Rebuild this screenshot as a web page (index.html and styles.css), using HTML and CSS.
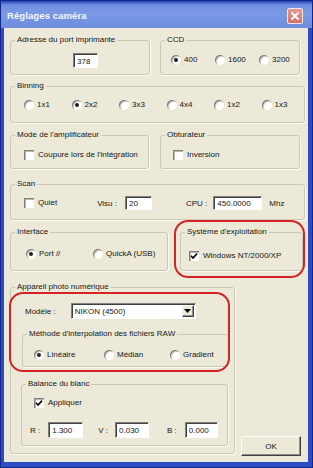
FILE: index.html
```html
<!DOCTYPE html>
<html lang="fr">
<head>
  <meta charset="UTF-8">
  <title>Réglages caméra</title>
  <link rel="stylesheet" href="styles.css">
</head>
<body>
<div class="window">
  <div class="titlebar">
    <span class="title">Réglages caméra</span>
    <span class="close">
      <svg width="10" height="10" viewBox="0 0 10 10"><path d="M1.5 1.5 L8.5 8.5 M8.5 1.5 L1.5 8.5" stroke="#fff" stroke-width="1.8" fill="none"/></svg>
    </span>
  </div>

  <div class="client">
    <div class="row">
      <fieldset class="g g-port">
        <legend>Adresse du port imprimante</legend>
        <div class="in in-port"><input class="edit e-port" value="378"></div>
      </fieldset>
      <fieldset class="g g-ccd">
        <legend>CCD</legend>
        <div class="in in-ccd">
          <label class="opt w-ccd"><span class="radio on"></span>400</label>
          <label class="opt w-ccd"><span class="radio"></span>1600</label>
          <label class="opt"><span class="radio"></span>3200</label>
        </div>
      </fieldset>
    </div>

    <fieldset class="g g-bin">
      <legend>Binning</legend>
      <div class="in in-bin">
        <label class="opt w-bin"><span class="radio"></span>1x1</label>
        <label class="opt w-bin"><span class="radio on"></span>2x2</label>
        <label class="opt w-bin"><span class="radio"></span>3x3</label>
        <label class="opt w-bin"><span class="radio"></span>4x4</label>
        <label class="opt w-bin"><span class="radio"></span>1x2</label>
        <label class="opt"><span class="radio"></span>1x3</label>
      </div>
    </fieldset>

    <div class="row r3">
      <fieldset class="g g-amp">
        <legend>Mode de l'amplificateur</legend>
        <div class="in in-amp">
          <label class="opt"><span class="check"></span>Coupure lors de l'intégration</label>
        </div>
      </fieldset>
      <fieldset class="g g-obt">
        <legend>Obturateur</legend>
        <div class="in in-obt">
          <label class="opt"><span class="check"></span>Inversion</label>
        </div>
      </fieldset>
    </div>

    <fieldset class="g g-scan">
      <legend>Scan</legend>
      <div class="in in-scan">
        <label class="opt"><span class="check"></span>Quiet</label>
        <span class="lbl l-visu">Visu :</span>
        <input class="edit e-visu" value="20">
        <span class="lbl l-cpu">CPU :</span>
        <input class="edit e-cpu" value="450.0000">
        <span class="lbl l-mhz">Mhz</span>
      </div>
    </fieldset>

    <div class="row r5">
      <fieldset class="g g-int">
        <legend>Interface</legend>
        <div class="in in-int">
          <label class="opt w-int"><span class="radio on"></span>Port //</label>
          <label class="opt"><span class="radio"></span>QuickA (USB)</label>
        </div>
      </fieldset>
      <fieldset class="g g-os">
        <legend>Système d'exploitation</legend>
        <div class="in in-os">
          <label class="opt"><span class="check on"><svg width="8" height="8" viewBox="0 0 8 8"><path d="M1 3.8 L3 6 L7 1.6" stroke="#000" stroke-width="1.6" fill="none"/></svg></span>Windows NT/2000/XP</label>
        </div>
      </fieldset>
    </div>

    <div class="row r6">
      <fieldset class="g g-cam">
        <legend>Appareil photo numérique</legend>
        <div class="in in-cam">
          <div class="model">
            <span class="lbl">Modèle :</span>
            <div class="combo">
              <span class="combo-text">NIKON (4500)</span>
              <span class="drop"><svg width="7" height="4" viewBox="0 0 7 4"><path d="M0 0 H7 L3.5 4 Z" fill="#000"/></svg></span>
            </div>
          </div>

          <fieldset class="g g-raw">
            <legend>Méthode d'interpolation des fichiers RAW</legend>
            <div class="in in-raw">
              <label class="opt w-raw"><span class="radio on"></span>Linéaire</label>
              <label class="opt w-raw2"><span class="radio"></span>Médian</label>
              <label class="opt"><span class="radio"></span>Gradient</label>
            </div>
          </fieldset>

          <fieldset class="g g-wb">
            <legend>Balance du blanc</legend>
            <div class="in in-wb">
              <label class="opt"><span class="check on"><svg width="8" height="8" viewBox="0 0 8 8"><path d="M1 3.8 L3 6 L7 1.6" stroke="#000" stroke-width="1.6" fill="none"/></svg></span>Appliquer</label>
              <div class="rgb">
                <span class="lbl">R :</span>
                <input class="edit e-r" value="1.300">
                <span class="lbl l-v">V :</span>
                <input class="edit e-v" value="0.030">
                <span class="lbl l-b">B :</span>
                <input class="edit e-b" value="0.000">
              </div>
            </div>
          </fieldset>
        </div>
      </fieldset>
      <button class="ok">OK</button>
    </div>
  </div>

  <!-- annotations rouges dessinées par-dessus la capture -->
  <div class="mark mark-os"></div>
  <div class="mark mark-cam"></div>
</div>
</body>
</html>
```

FILE: styles.css
```css
* {
  margin: 0;
  padding: 0;
  box-sizing: border-box;
}

body {
  font-family: "Liberation Sans", Arial, sans-serif;
  font-size: 8px;
  color: #151515;
  background: #ece9d8;
}

/* Fenêtre */
.window {
  position: relative;
  width: 313px;
  height: 468px;
  display: flex;
  flex-direction: column;
  background: #2b4cc2;
  box-shadow: inset 0 0 0 1px #14258a;
}

.titlebar {
  height: 28px;
  flex: none;
  display: flex;
  align-items: center;
  justify-content: space-between;
  padding: 2px 9px 0 6px;
  background: linear-gradient(to bottom, #2444b8 0, #6f8fe0 4px, #7b99e4 45%, #6d8cdc 100%);
  border-left: 1px solid #14258a;
  border-right: 1px solid #14258a;
  border-top: 1px solid #14258a;
}

.title {
  color: #f4f6ff;
  font-weight: bold;
  font-size: 9.5px;
  letter-spacing: 0.1px;
}

.close {
  width: 16px;
  height: 16px;
  display: flex;
  align-items: center;
  justify-content: center;
  border: 1px solid #f3e6e6;
  border-radius: 2px;
  background: linear-gradient(to bottom, #e39a92, #d27468);
}

.client {
  flex: 1;
  margin: 0 5px 6px 4px;
  padding: 6px 0 0 6px;
  background: #ece9d8;
  display: flex;
  flex-direction: column;
}

.row {
  display: flex;
}

/* Cadres de groupe */
.g {
  border: 1px solid #cbc8b8;
  border-radius: 3px;
  min-inline-size: 0;
  box-shadow: 1px 1px 0 #fbfaf4;
}

.g legend {
  margin-left: 4px;
  padding: 0 2px;
  line-height: 12px;
}

.in {
  display: flex;
  align-items: center;
}

.opt {
  display: flex;
  align-items: center;
  height: 12px;
  line-height: 12px;
  white-space: nowrap;
}

.lbl {
  white-space: nowrap;
}

.radio {
  width: 10px;
  height: 10px;
  flex: none;
  margin-right: 3px;
  border-radius: 50%;
  background: #fff;
  box-shadow: inset 1px 1px 0 #7c7c7c, inset 2px 2px 0 #d6d4ca;
  display: flex;
  align-items: center;
  justify-content: center;
}

.radio.on::after {
  content: "";
  width: 4px;
  height: 4px;
  border-radius: 50%;
  background: #202020;
}

.check {
  width: 10px;
  height: 10px;
  flex: none;
  margin-right: 4px;
  background: #fff;
  box-shadow: inset 1px 1px 0 #808080, inset 2px 2px 0 #b8b6ac;
  display: flex;
  align-items: center;
  justify-content: center;
}

.edit {
  height: 15px;
  font: inherit;
  color: #151515;
  background: #fff;
  border: 1px solid;
  border-color: #7f7f7f #fdfdfd #fdfdfd #7f7f7f;
  box-shadow: inset 1px 1px 0 #404040;
  padding: 1px 0 0 3px;
  outline: none;
}

/* Rangée 1 */
.g-port {
  width: 140px;
  height: 41px;
}

.in-port {
  padding: 7px 0 0 62px;
}

.e-port {
  width: 25px;
}

.g-ccd {
  width: 140px;
  height: 41px;
  margin-left: 10px;
}

.in-ccd {
  padding: 8px 0 0 10px;
}

.w-ccd {
  width: 44px;
}

/* Binning */
.g-bin {
  width: 295px;
  height: 43px;
  margin-top: 5px;
}

.in-bin {
  padding: 7px 0 0 13px;
}

.w-bin {
  width: 47.5px;
}

/* Amplificateur / obturateur */
.r3 {
  margin-top: 6px;
}

.g-amp {
  width: 139px;
  height: 40px;
}

.in-amp {
  padding: 8px 0 0 13px;
}

.g-obt {
  width: 140px;
  height: 40px;
  margin-left: 11px;
}

.in-obt {
  padding: 8px 0 0 12px;
}

/* Scan */
.g-scan {
  width: 295px;
  height: 42px;
  margin-top: 9px;
}

.in-scan {
  padding: 6px 0 0 13px;
}

.l-visu {
  margin-left: 40px;
}

.e-visu {
  width: 27px;
  height: 14px;
  margin-left: 8px;
}

.l-cpu {
  margin-left: 34px;
}

.e-cpu {
  width: 49px;
  height: 14px;
  margin-left: 6px;
}

.l-mhz {
  margin-left: 7px;
}

/* Interface / système */
.r5 {
  margin-top: 6px;
}

.g-int {
  width: 158px;
  height: 45px;
}

.in-int {
  padding: 10px 0 0 15px;
}

.w-int {
  width: 67px;
}

.g-os {
  width: 123px;
  height: 45px;
  margin-left: 12px;
}

.in-os {
  padding: 12px 0 0 8px;
}

/* Appareil photo */
.r6 {
  margin-top: 10px;
  align-items: flex-end;
}

.g-cam {
  width: 225px;
  height: 173px;
}

.in-cam {
  display: block;
  padding: 10px 7px 0 10px;
}

.model {
  display: flex;
  align-items: center;
  padding-left: 4px;
}

.combo {
  width: 125px;
  height: 16px;
  margin-left: 15px;
  display: flex;
  align-items: center;
  background: #fff;
  border: 1px solid;
  border-color: #7f7f7f #fdfdfd #fdfdfd #7f7f7f;
  box-shadow: inset 1px 1px 0 #404040;
  padding: 0 1px 0 3px;
}

.combo-text {
  flex: 1;
}

.drop {
  width: 12px;
  height: 12px;
  display: flex;
  align-items: center;
  justify-content: center;
  background: #ece9d8;
  border: 1px solid;
  border-color: #f8f8f8 #404040 #404040 #f8f8f8;
  box-shadow: inset -1px -1px 0 #909090;
}

.g-raw {
  width: 207px;
  height: 39px;
  margin-top: 9px;
  margin-left: 1px;
}

.in-raw {
  padding: 9px 0 0 11px;
}

.w-raw {
  width: 70px;
}

.w-raw2 {
  width: 66px;
}

.g-wb {
  width: 207px;
  height: 68px;
  margin-top: 11px;
}

.in-wb {
  display: block;
  padding: 7px 0 0 12px;
}

.rgb {
  display: flex;
  align-items: center;
  margin: 13px 0 0 -4px;
}

.rgb .edit {
  height: 16px;
}

.e-r {
  width: 35px;
  margin-left: 8px;
}

.l-v {
  margin-left: 15px;
}

.e-v {
  width: 34px;
  margin-left: 7px;
}

.l-b {
  margin-left: 18px;
}

.e-b {
  width: 33px;
  margin-left: 8px;
}

.ok {
  width: 60px;
  height: 20px;
  margin: 0 0 -2px 6px;
  font: inherit;
  color: #151515;
  background: #ece9d8;
  border: 1px solid;
  border-color: #fcfcfc #404040 #404040 #fcfcfc;
  box-shadow: inset -1px -1px 0 #8c8c8c;
}

/* Annotations rouges */
.mark {
  position: absolute;
  border: 2px solid #d32525;
  border-radius: 14px;
  pointer-events: none;
}

.mark-os {
  left: 174px;
  top: 220px;
  width: 131px;
  height: 58px;
}

.mark-cam {
  left: 9px;
  top: 292px;
  width: 221px;
  height: 80px;
}
```
